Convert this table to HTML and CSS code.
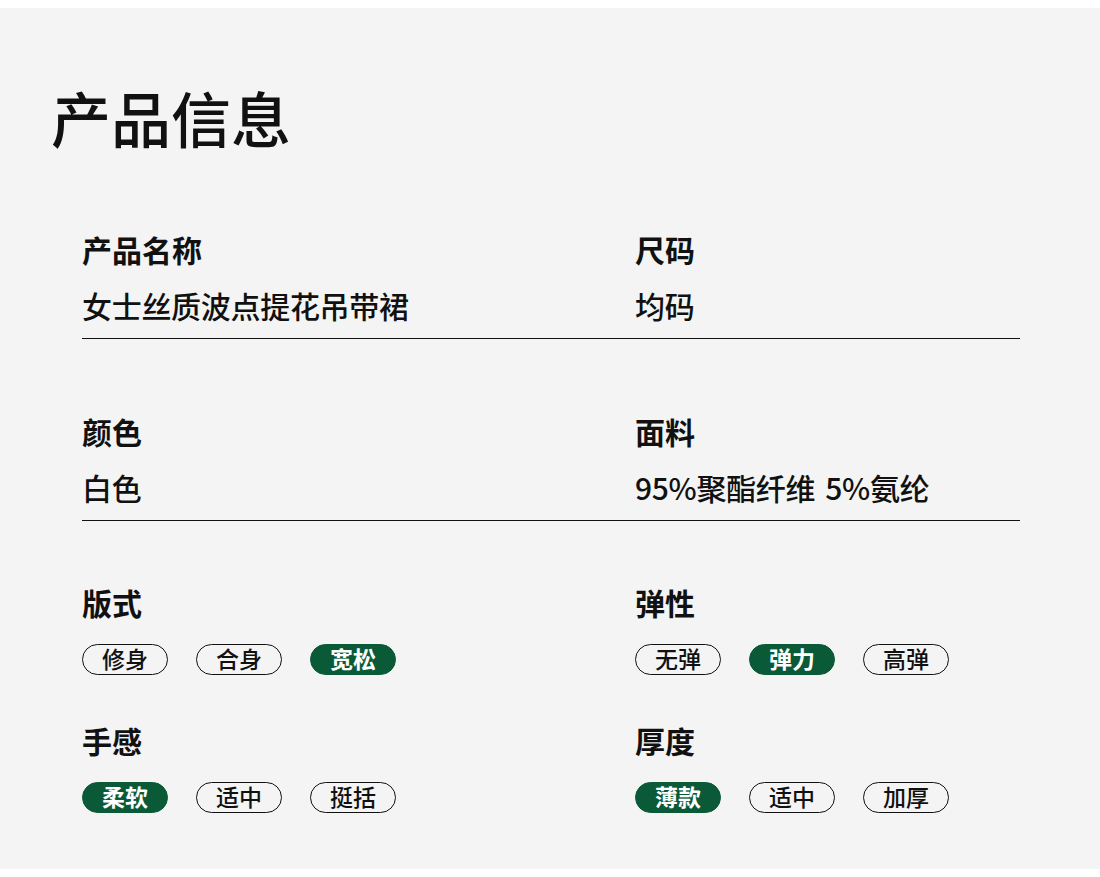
FILE: index.html
```html
<!DOCTYPE html>
<html lang="zh-CN">
<head>
<meta charset="utf-8">
<title>产品信息</title>
<link rel="stylesheet" href="styles.css">
</head>
<body>
<section class="page">
  <h1 class="title">产品信息</h1>
  <div class="info">
    <div class="row row-text">
      <div class="cell">
        <div class="label">产品名称</div>
        <div class="value">女士丝质波点提花吊带裙</div>
      </div>
      <div class="cell">
        <div class="label">尺码</div>
        <div class="value">均码</div>
      </div>
    </div>
    <div class="row row-text row-second">
      <div class="cell">
        <div class="label">颜色</div>
        <div class="value">白色</div>
      </div>
      <div class="cell">
        <div class="label">面料</div>
        <div class="value">95%聚酯纤维<span class="sep"> </span>5%氨纶</div>
      </div>
    </div>
    <div class="row row-tags row-third">
      <div class="cell">
        <div class="label">版式</div>
        <div class="tags">
          <span class="tag">修身</span>
          <span class="tag">合身</span>
          <span class="tag active">宽松</span>
        </div>
      </div>
      <div class="cell">
        <div class="label">弹性</div>
        <div class="tags">
          <span class="tag">无弹</span>
          <span class="tag active">弹力</span>
          <span class="tag">高弹</span>
        </div>
      </div>
    </div>
    <div class="row row-tags row-fourth">
      <div class="cell">
        <div class="label">手感</div>
        <div class="tags">
          <span class="tag active">柔软</span>
          <span class="tag">适中</span>
          <span class="tag">挺括</span>
        </div>
      </div>
      <div class="cell">
        <div class="label">厚度</div>
        <div class="tags">
          <span class="tag active">薄款</span>
          <span class="tag">适中</span>
          <span class="tag">加厚</span>
        </div>
      </div>
    </div>
  </div>
</section>
</body>
</html>
```

FILE: styles.css
```css
html, body {
  margin: 0;
  padding: 0;
  background: #ffffff;
}
body {
  padding: 8px 0;
  font-family: "Noto Sans CJK SC", "Noto Sans", sans-serif;
  color: #111111;
}
.page {
  background: #f4f4f4;
  height: 861px;
  box-sizing: border-box;
  padding-top: 79px;
}
.title {
  margin: 0 0 0 51px;
  font-size: 60px;
  line-height: 60px;
  font-weight: 500;
  letter-spacing: 0;
}
.info {
  margin: 88px 0 0 82px;
  width: 938px;
}
.row {
  display: grid;
  grid-template-columns: 553px 1fr;
}
.row-text {
  border-bottom: 1px solid #111111;
  padding-bottom: 18px;
}
.row-second {
  margin-top: 78px;
}
.row-third {
  margin-top: 67px;
}
.row-fourth {
  margin-top: 51px;
}
.label {
  font-size: 30px;
  line-height: 29px;
  font-weight: 700;
}
.value {
  margin-top: 27px;
  font-size: 30px;
  line-height: 29px;
  font-weight: 500;
  letter-spacing: -0.3px;
}
.sep {
  display: inline-block;
  width: 10px;
}
.tags {
  margin-top: 27px;
  display: flex;
  gap: 28px;
}
.tag {
  box-sizing: border-box;
  width: 86px;
  height: 31px;
  padding-bottom: 2px;
  border: 1.5px solid #111111;
  border-radius: 16px;
  display: flex;
  align-items: center;
  justify-content: center;
  font-size: 23px;
  line-height: 1;
  font-weight: 500;
}
.tag.active {
  background: #0b5a37;
  border-color: #0b5a37;
  color: #ffffff;
  font-weight: 700;
}
```
